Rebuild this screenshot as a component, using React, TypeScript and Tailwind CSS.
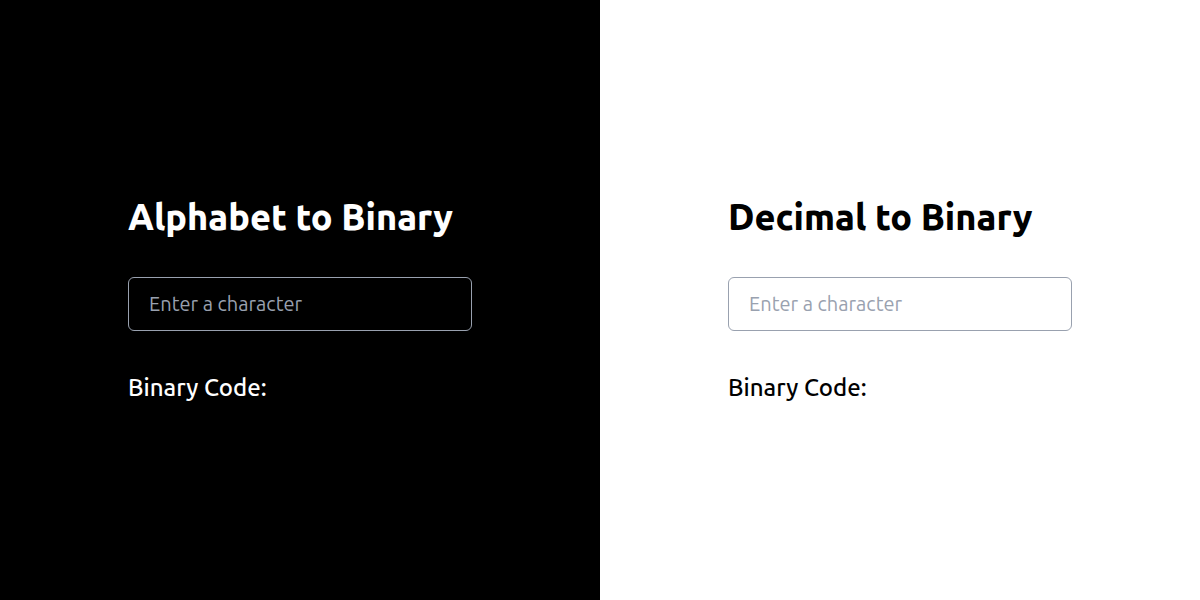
export default function App() {
  const panels = [
    { title: 'Alphabet to Binary', dark: true },
    { title: 'Decimal to Binary', dark: false },
  ]

  return (
    <div className="flex h-[600px] w-full font-['Ubuntu','Noto_Sans',sans-serif]">
      {panels.map(panel => (
        <div
          key={panel.title}
          className={`flex w-1/2 items-center justify-center ${panel.dark ? 'bg-black text-white' : 'bg-white text-black'}`}
        >
          <div className="flex w-[344px] flex-col">
            <h1 className="text-[36px] font-extrabold leading-[38px]">{panel.title}</h1>
            <input
              type="text"
              placeholder="Enter a character"
              className={`mt-[41px] h-[54px] w-full rounded-md border border-gray-400 px-5 text-[20px] font-normal outline-none placeholder-gray-400 ${panel.dark ? 'bg-black text-white' : 'bg-white text-black'}`}
            />
            <p className="mt-[42px] text-[24px] font-medium leading-[30px]">Binary Code:</p>
          </div>
        </div>
      ))}
    </div>
  )
}
